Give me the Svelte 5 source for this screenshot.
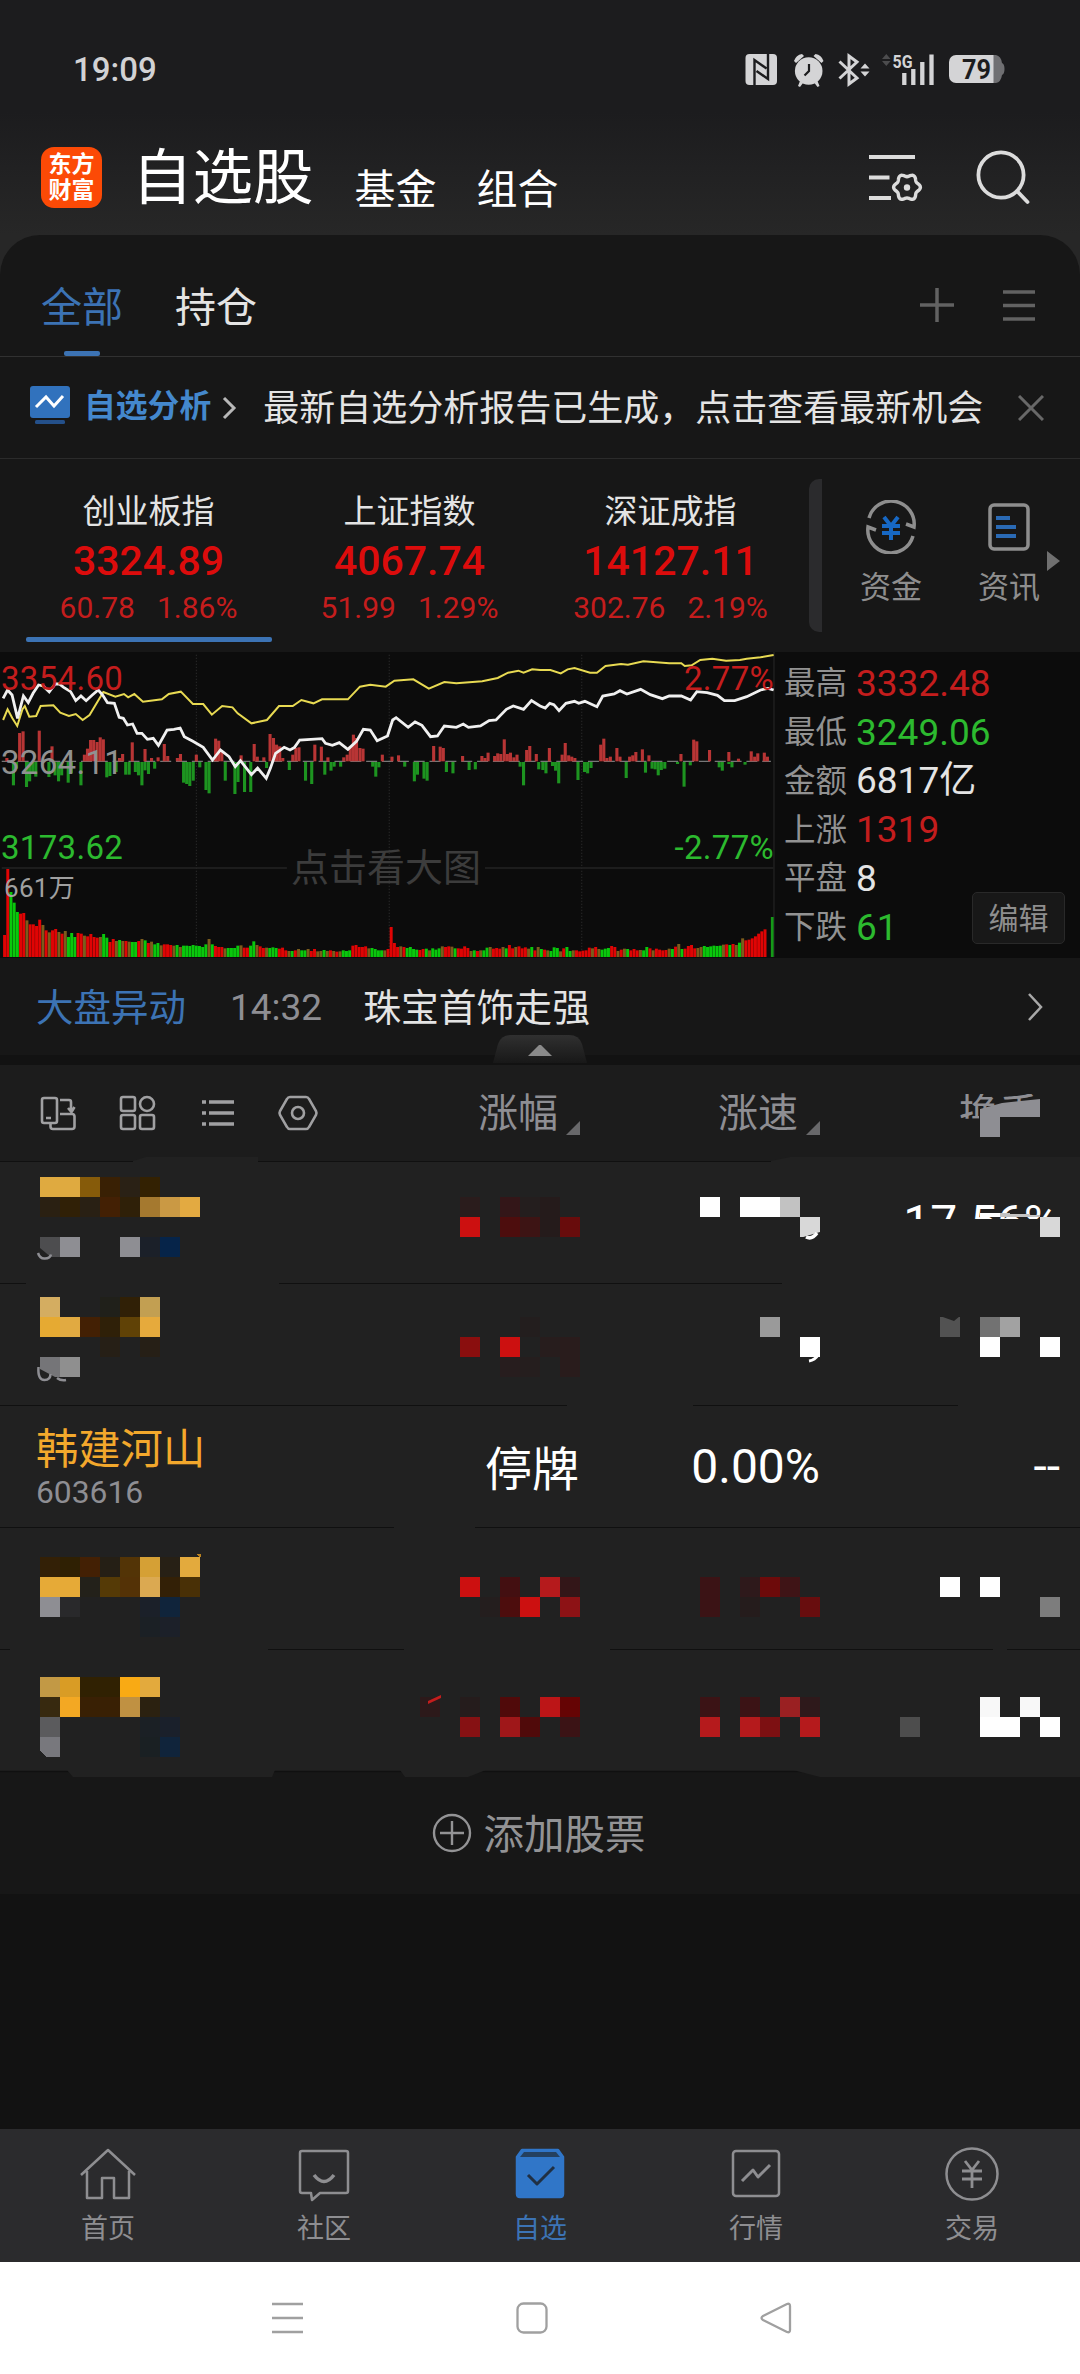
<script>
  const indexes = [
    { name: '创业板指', value: '3324.89', change: '60.78', percent: '1.86%' },
    { name: '上证指数', value: '4067.74', change: '51.99', percent: '1.29%' },
    { name: '深证成指', value: '14127.11', change: '302.76', percent: '2.19%' }
  ];

  const stats = [
    { label: '最高', value: '3332.48', tone: 'up' },
    { label: '最低', value: '3249.06', tone: 'down' },
    { label: '金额', value: '6817亿', tone: '' },
    { label: '上涨', value: '1319', tone: 'up' },
    { label: '平盘', value: '8', tone: '' },
    { label: '下跌', value: '61', tone: 'down' }
  ];

  // chart series, in units of the chart's viewBox
  const priceLine = '9,175 22,150 35,165 51,235 68,168 82,188 96,160 112,135 125,138 143,156 160,132 172,132 185,142 205,155 220,182 235,168 250,182 268,165 285,150 298,165 312,188 332,190 346,232 358,235 370,255 385,252 398,280 412,280 428,298 445,295 460,316 485,270 505,268 523,264 535,290 560,304 590,322 617,360 640,330 665,350 683,380 698,362 730,404 748,384 773,415 785,385 800,340 825,322 842,330 855,322 870,300 935,296 945,310 965,316 985,308 1010,328 1035,304 1055,268 1075,270 1095,302 1125,288 1140,240 1150,233 1185,262 1205,246 1225,256 1250,290 1270,288 1290,258 1325,262 1345,252 1360,262 1395,258 1420,242 1440,240 1470,208 1490,198 1520,208 1543,182 1568,198 1583,204 1596,190 1608,194 1623,212 1643,190 1668,184 1680,190 1698,184 1733,200 1750,168 1783,162 1800,152 1820,162 1860,148 1888,164 1923,176 1943,168 1978,168 2005,180 2023,155 2053,158 2083,166 2103,182 2133,182 2168,170 2208,150 2230,145 2246,150';
  const averageLine = '9,240 22,208 36,235 50,258 65,208 72,198 85,230 105,228 118,198 155,196 175,218 200,228 220,222 240,240 260,225 300,156 335,170 360,162 372,172 390,162 415,185 470,178 490,162 525,155 560,192 590,192 615,224 645,198 675,202 690,220 730,250 775,240 810,198 850,198 875,180 910,190 935,178 1010,178 1045,140 1075,134 1120,140 1145,122 1200,118 1245,146 1290,126 1325,130 1400,124 1445,114 1475,98 1505,92 1520,98 1545,88 1568,90 1598,90 1628,100 1648,88 1668,84 1713,98 1733,98 1758,78 1803,72 1823,74 1868,64 1943,70 1978,70 1988,78 2008,76 2033,60 2068,56 2108,62 2148,60 2168,56 2208,52 2246,45';

  const momentumUp = [[20,10],[57,85],[67,90],[114,92],[151,45],[245,20],[254,38],[263,64],[272,64],[282,58],[291,72],[300,66],[347,10],[356,22],[384,57],[421,37],[440,10],[459,12],[477,52],[487,16],[515,10],[524,22],[570,20],[626,68],[635,62],[644,30],[700,18],[738,52],[747,14],[766,12],[784,82],[794,70],[803,50],[812,45],[821,10],[850,20],[859,40],[868,42],[914,50],[933,44],[952,12],[998,12],[1008,20],[1017,45],[1026,80],[1035,70],[1045,40],[1054,38],[1110,20],[1138,14],[1157,18],[1259,46],[1278,44],[1287,40],[1343,16],[1399,16],[1408,10],[1417,26],[1436,16],[1445,24],[1454,22],[1464,66],[1473,22],[1482,26],[1492,12],[1501,20],[1529,34],[1538,46],[1557,22],[1595,40],[1632,20],[1641,55],[1651,18],[1660,14],[1669,10],[1744,50],[1753,68],[1762,10],[1772,14],[1791,40],[1800,14],[1828,14],[1837,18],[1846,28],[1865,36],[1884,18],[1977,22],[2014,65],[2023,60],[2060,34],[2116,28],[2144,8],[2181,30],[2191,14],[2200,24],[2219,26],[2228,14]];
  const momentumDown = [[39,70],[48,20],[77,75],[86,58],[95,30],[104,44],[142,45],[160,40],[170,58],[179,40],[198,62],[207,34],[235,70],[310,46],[319,42],[337,30],[365,38],[375,38],[393,30],[402,40],[412,70],[421,25],[431,36],[449,20],[533,62],[542,66],[551,72],[561,56],[580,16],[598,84],[607,94],[654,56],[682,96],[691,60],[710,90],[728,90],[774,18],[840,24],[887,56],[905,66],[943,38],[961,26],[970,14],[989,14],[1082,14],[1091,44],[1100,16],[1175,14],[1203,58],[1212,38],[1231,50],[1240,56],[1296,30],[1315,34],[1362,24],[1380,22],[1510,14],[1520,70],[1564,22],[1576,24],[1585,34],[1604,12],[1613,26],[1622,64],[1678,54],[1697,30],[1706,34],[1716,18],[1818,48],[1874,32],[1893,20],[1902,22],[1911,40],[1920,24],[1930,20],[1967,6],[1986,74],[2004,10],[2088,16],[2097,26],[2116,6],[2125,16],[2163,8]];

  const volumes = [66,264,195,163,135,130,132,110,98,98,93,112,96,80,74,80,84,75,70,78,60,72,60,72,70,64,62,69,60,58,60,69,58,45,54,48,51,48,48,46,45,45,48,54,50,42,46,38,42,35,38,38,36,34,36,30,34,34,33,36,34,33,30,38,54,38,33,30,30,26,27,27,27,34,35,28,28,34,47,36,32,27,28,27,29,27,25,28,20,18,18,20,24,20,20,24,18,24,17,18,21,18,20,18,16,17,20,18,20,34,36,30,30,32,26,27,24,20,20,20,24,90,42,30,32,30,27,30,24,22,21,24,25,20,26,22,26,32,30,32,31,26,26,25,32,27,18,20,18,20,20,28,30,25,27,25,30,26,36,26,30,32,26,29,25,30,20,30,24,22,20,18,29,27,17,26,30,18,20,20,17,19,20,28,26,30,24,22,25,27,33,30,18,22,25,24,20,24,20,21,20,30,26,20,25,22,20,21,25,24,31,39,24,25,33,36,26,27,30,33,30,32,34,33,34,37,38,36,39,36,43,56,50,52,56,62,70,77,83];
  const volumeTones = 'rrgggrrmrrrrmrmrrmrmgggrrmrrrrmggrrmgmrmggrmgrmggmrrrmgmggggggggmgrrrmggggmrrggmrrmgggrrrmgrmggmrrmmgmrmrmgggrrrrrmggggmrrrrmrggggrrgmgggmrrmgrrrrmgrmggmrrrmgrrmrrrmgrmgrmgggmrggmrrrrrmrmgggrrmrmgrrrmggrmrrrrmgrmgrrrrmmggggggmrgrmgmrrrrrrr';
  const toneColors = { r: '#e00404', g: '#09c80c', m: '#7c5c1c' };
  const volumeStep = 2217 / volumes.length;

  // six-lobed outline of the settings gear
  const gear = Array.from({ length: 73 }, (_, i) => {
    const a = (i * Math.PI) / 36;
    const r = 12 + 1.4 * Math.cos(6 * a);
    return `${(38 + r * Math.cos(a)).toFixed(2)},${(34.3 + r * Math.sin(a)).toFixed(2)}`;
  }).join(' ');

  // mosaic blocks per row: [x, y, colour], y counted from the row's top line
  const rows = [
    {
      blocks: [
        [40,16,'#dfaa40'],[60,16,'#dfaa40'],[80,16,'#865b0a'],[100,16,'#392004'],[120,16,'#2a2115'],[140,16,'#332102'],
        [40,36,'#2a2012'],[60,36,'#302006'],[80,36,'#292014'],[100,36,'#432004'],[120,36,'#2f2008'],[140,36,'#a5792f'],[160,36,'#ca9944'],[180,36,'#e3aa41'],
        [40,76,'#4d4d4f'],[60,76,'#8e8e93'],[120,76,'#8e8e93'],[140,76,'#1b2029'],[160,76,'#062449'],
        [460,36,'#2a1c1c'],[500,36,'#331618'],[520,36,'#241e1e'],[540,36,'#251b1b'],
        [460,56,'#cc1010'],[500,56,'#4d0d0d'],[520,56,'#3d1414'],[540,56,'#251b1b'],[560,56,'#680c0c'],
        [700,36,'#fff'],[740,36,'#fff'],[760,36,'#fff'],[780,36,'#c2c2c2'],[800,56,'#d8d8d8'],[1040,56,'#d8d8d8']
      ],
      gaps: [[133,258],[771,1080]]
    },
    {
      blocks: [
        [40,14,'#d4ad61'],[100,14,'#20201a'],[120,14,'#302006'],[140,14,'#c29f52'],
        [40,34,'#e6aa32'],[60,34,'#e1aa41'],[80,34,'#432004'],[100,34,'#2f2008'],[120,34,'#604206'],[140,34,'#e6aa3c'],
        [100,54,'#261f16'],[140,54,'#261f16'],[40,74,'#757578'],[60,74,'#8f8f8f'],
        [520,34,'#231e1e'],[460,54,'#8a0e0e'],[500,54,'#cc1010'],[540,54,'#271d1d'],[560,54,'#291c1c'],
        [500,74,'#271d1e'],[520,74,'#251e1e'],[560,74,'#291c1c'],
        [760,34,'#9a9a9a'],[800,54,'#fff'],[940,34,'#525252'],[980,34,'#727272'],[1000,34,'#a2a2a2'],[980,54,'#fff'],[1040,54,'#fff']
      ],
      gaps: [[26,279],[782,1080]]
    },
    {
      name: '韩建河山', code: '603616', change: '停牌', speed: '0.00%', turnover: '--',
      blocks: [],
      gaps: [[567,693],[958,1080]]
    },
    {
      blocks: [
        [40,30,'#332006'],[60,30,'#2f2003'],[80,30,'#432004'],[100,30,'#251f15'],[120,30,'#533406'],[140,30,'#d5a035'],[160,30,'#272015'],[180,30,'#e3aa3d'],
        [40,50,'#e6aa37'],[60,50,'#e6aa37'],[80,50,'#23211a'],[100,50,'#553a06'],[120,50,'#543206'],[140,50,'#dba951'],[160,50,'#332006'],[180,50,'#493006'],
        [40,70,'#8e8e93'],[60,70,'#29292b'],[140,70,'#1b2029'],[160,70,'#10243b'],[140,90,'#1b2025'],[160,90,'#1c2029'],
        [460,50,'#cc1010'],[500,50,'#430f11'],[540,50,'#b51a1c'],[560,50,'#331618'],
        [480,70,'#241e1e'],[500,70,'#4d0d0d'],[520,70,'#cc1010'],[560,70,'#8d1215'],
        [700,50,'#3b1315'],[740,50,'#2e191b'],[760,50,'#6d0a0a'],[780,50,'#3f1416'],[700,70,'#3b1315'],[740,70,'#251c1c'],[800,70,'#680d0e'],
        [940,50,'#fff'],[980,50,'#fff'],[1040,70,'#7d7d7d']
      ],
      gaps: [[394,475]]
    },
    {
      blocks: [
        [40,28,'#c29945'],[60,28,'#d99c25'],[80,28,'#302102'],[100,28,'#302102'],[120,28,'#f9aa14'],[140,28,'#e3aa3d'],
        [40,48,'#37290f'],[60,48,'#f3a823'],[80,48,'#392004'],[100,48,'#392004'],[120,48,'#c09142'],[140,48,'#2b2110'],
        [40,68,'#5b5b5d'],[140,68,'#1b2025'],[160,68,'#1a202b'],[40,88,'#78787d'],[140,88,'#1a2023'],[160,88,'#10243b'],
        [420,48,'#2c191a'],[460,48,'#251c1c'],[500,48,'#500a0a'],[540,48,'#bc1517'],[560,48,'#650404'],
        [460,68,'#861113'],[500,68,'#9f1719'],[520,68,'#500a0a'],[560,68,'#3b1315'],
        [700,48,'#3b1315'],[740,48,'#3b1315'],[780,48,'#9a2022'],[800,48,'#2e191b'],
        [700,68,'#b51a1c'],[740,68,'#b51a1c'],[760,68,'#7d1012'],[800,68,'#b51a1c'],
        [980,48,'#f8f8f8'],[1020,48,'#f8f8f8'],[900,68,'#4d4d4d'],[980,68,'#fff'],[1000,68,'#fff'],[1040,68,'#fff']
      ],
      gaps: [[10,268],[404,610],[993,1007]]
    }
  ];

  const navItems = [
    { id: 'home', label: '首页' },
    { id: 'community', label: '社区' },
    { id: 'watchlist', label: '自选' },
    { id: 'market', label: '行情' },
    { id: 'trade', label: '交易' }
  ];

  let active = 'watchlist';
</script>

<div class="screen">
  <div class="status-bar">
    <span class="time">19:09</span>
    <svg class="status-icons" width="264" height="36" viewBox="0 0 264 36">
      <rect x="3.500" y="2" width="31.500" height="31" rx="4" fill="#d4d4d6" />
      <path d="M12.500 33V8l12 8.500M26 2v25L14.500 19" fill="none" stroke="#1c1c1e" stroke-width="2.400" />
      <g fill="#d4d4d6">
        <circle cx="66.700" cy="19" r="13.800" />
        <path d="M52 9q2-6 8-7l2 2-8 7zM81.500 9q-2-6-8-7l-2 2 8 7zM58 29l3 2-3 4-2-1zM75.500 29l-3 2 3 4 2-1z" />
      </g>
      <path d="M67 12v7l-4.500 4.500" fill="none" stroke="#1c1c1e" stroke-width="2.200" />
      <path d="M97.500 9.500L115 26l-8 6V4l8 6-17.500 16.500" fill="none" stroke="#d4d4d6" stroke-width="3" />
      <path d="M118.500 16.500l4.500-5 4.500 5zM118.500 19.500l4.500 5 4.500-5z" fill="#d4d4d6" />
      <path d="M140 7l4.300-5 4.300 5zM140 9l4.300 5 4.300-5z" fill="#4c4c4e" />
      <text x="150.500" y="15.500" class="signal-label" textLength="20" lengthAdjust="spacingAndGlyphs">5G</text>
      <path d="M162.300 21v12M171.300 17v16M180.300 10v23M189.500 2.500v30.500" stroke="#d4d4d6" stroke-width="4.300" stroke-linejoin="round" />
      <path d="M250 3h4q5 1 6 8 2.500 1 2.500 6t-2.500 6q-1 7-6 8h-4z" fill="#6f6f72" />
      <path d="M214 3h37.500v28H214a7 7 0 0 1-7-7V10a7 7 0 0 1 7-7z" fill="#d4d4d6" />
      <text x="220" y="27" class="battery-label" textLength="29" lengthAdjust="spacingAndGlyphs">79</text>
    </svg>
  </div>

  <header class="header">
    <div class="logo"><span>东方</span><span>财富</span></div>
    <h1>自选股</h1>
    <span class="section">基金</span>
    <span class="section">组合</span>
    <svg class="filter-icon" width="54" height="52" viewBox="0 0 54 52" fill="none" stroke="#dcdcdc" stroke-width="4">
      <path d="M0 4h46M0 24.500h20.500M0 45h22" />
      <polygon points={gear} stroke-width="3.400" />
      <circle cx="38" cy="34.500" r="3.200" fill="#dcdcdc" stroke="none" />
    </svg>
    <svg class="search-icon" width="56" height="56" viewBox="0 0 56 56" fill="none" stroke="#dcdcdc" stroke-width="3.800">
      <circle cx="26" cy="26" r="22.600" />
      <path d="M42 42l10.500 11" stroke-linecap="round" />
    </svg>
  </header>

  <div class="tabs">
    <span class="tab active">全部</span>
    <span class="tab">持仓</span>
    <svg class="plus-icon" width="36" height="36" viewBox="0 0 36 36" stroke="#626262" stroke-width="3.500">
      <path d="M18 1v34M1 18h34" />
    </svg>
    <svg width="32" height="32" viewBox="0 0 32 32" stroke="#626262" stroke-width="3.600">
      <path d="M0 3h32M0 16.500h32M0 30h32" />
    </svg>
  </div>

  <div class="notice">
    <svg class="notice-icon" width="42" height="40" viewBox="0 0 42 40">
      <rect x="1" y="1" width="40" height="32" rx="3" fill="#3172bd" />
      <path d="M7 22l10-10 8 9 9-10" fill="none" stroke="#fff" stroke-width="3" />
      <rect x="6" y="35" width="30" height="4" rx="1.500" fill="#24508a" />
    </svg>
    <strong>自选分析</strong>
    <svg class="notice-arrow" width="15" height="24" viewBox="0 0 15 24" fill="none" stroke="#b8b8b8" stroke-width="3">
      <path d="M2 2l10 10L2 22" />
    </svg>
    <span class="notice-text">最新自选分析报告已生成，点击查看最新机会</span>
    <svg class="close" width="26" height="26" viewBox="0 0 26 26" stroke="#686868" stroke-width="3">
      <path d="M1 1l24 24M25 1L1 25" />
    </svg>
  </div>

  <div class="indexes">
    {#each indexes as item, i}
      <div class="index" class:selected={i === 0}>
        <span class="index-name">{item.name}</span>
        <span class="index-value">{item.value}</span>
        <span class="index-change"><span>{item.change}</span><span>{item.percent}</span></span>
      </div>
    {/each}
    <div class="divider"></div>
    <div class="shortcut funds">
      <svg width="52" height="54" viewBox="0 0 52 54" fill="none" stroke="#8e8e8e" stroke-width="3.500">
        <path d="M4 18A23 23 0 0 1 49 27l-8-3M48 36A23 23 0 0 1 3 27l8 3" />
        <path d="M19 17l7 9 7-9M17 26h18M17 33h18M26 26v14" stroke="#1768c4" stroke-width="4" />
      </svg>
      <span>资金</span>
    </div>
    <div class="shortcut news">
      <svg width="42" height="54" viewBox="0 0 42 54" fill="none" stroke="#8e8e8e" stroke-width="3.500">
        <rect x="2" y="5" width="38" height="44" rx="4" />
        <path d="M8 18h14M8 27h20M8 36h20" stroke="#2a6ab5" stroke-width="4" />
      </svg>
      <span>资讯</span>
    </div>
    <svg class="more-arrow" width="13" height="22" viewBox="0 0 13 22"><path d="M0 1l13 10L0 21z" fill="#707070" /></svg>
  </div>

  <div class="market">
    <div class="chart">
      <svg width="775" height="305" viewBox="0 36 2250 915" preserveAspectRatio="none">
        <g stroke="#333" stroke-dasharray="3 6" stroke-width="3">
          <path d="M570 44V951M1130 44V951M1689 44V951" />
        </g>
        <path d="M5 684H833M1408 684H2247" stroke="#232323" stroke-width="5" />
        <path d="M2247 36V951" stroke="#1d1d1d" stroke-width="5" />
        <path d="M5 364H2238" stroke="#777" stroke-width="4" stroke-dasharray="32 14" />
        {#each momentumUp as [x, h]}
          <rect x={x - 4.5} y={364 - h} width="9" height={h} fill="#b83535" />
        {/each}
        {#each momentumDown as [x, h]}
          <rect x={x - 4.5} y="366" width="9" height={h} fill="#1d9420" />
        {/each}
        {#each volumes as h, i}
          <rect x={9 + i * volumeStep} y={951 - h} width="8.600" height={h} fill={toneColors[volumeTones[i] ?? 'r']} />
        {/each}
        <rect x="2238" y="831" width="8" height="120" fill="#159a18" />
        <polyline points={averageLine} fill="none" stroke="#e8da52" stroke-width="2" vector-effect="non-scaling-stroke" />
        <polyline points={priceLine} fill="none" stroke="#f0f0f0" stroke-width="2.800" vector-effect="non-scaling-stroke" />
      </svg>
      <div class="axis">
        <div class="axis-row high"><span>3354.60</span><span>2.77%</span></div>
        <div class="axis-row mid"><span>3264.11</span></div>
        <div class="axis-row low"><span>3173.62</span><span>-2.77%</span></div>
        <div class="axis-row volume"><span>661万</span></div>
      </div>
      <span class="chart-hint">点击看大图</span>
    </div>
    <div class="stats">
      {#each stats as stat}
        <div class="stat"><span class="stat-label">{stat.label}</span><span class={stat.tone}>{stat.value}</span></div>
      {/each}
      <button class="edit">编辑</button>
    </div>
  </div>

  <div class="movement">
    <span class="movement-title">大盘异动</span>
    <span class="movement-time">14:32</span>
    <span class="movement-text">珠宝首饰走强</span>
    <svg width="16" height="30" viewBox="0 0 16 30" fill="none" stroke="#a8a8a8" stroke-width="2.500"><path d="M2 2l12 13L2 28" /></svg>
    <svg class="pull-tab" width="94" height="28" viewBox="0 0 94 28">
      <defs>
        <linearGradient id="pull" x1="0" y1="0" x2="0" y2="1">
          <stop offset="0" stop-color="#303030" /><stop offset="1" stop-color="#181818" />
        </linearGradient>
      </defs>
      <path d="M0 28Q2 20 5 9 8 0 18 0H76Q86 0 89 9 92 20 94 28z" fill="url(#pull)" />
      <path d="M35 21l11-11h2l11 11z" fill="#8a8a8a" />
    </svg>
  </div>

  <div class="table-head">
    <svg class="tools" width="290" height="38" viewBox="0 0 290 38" fill="none" stroke="#a0a0a2" stroke-width="2.600">
      <rect x="5" y="4" width="15" height="25" rx="2" />
      <path d="M9 24h5M23 6h9q2 0 2 2v10M31 14l3.500 4 3-5M23 20h12q2.500 0 2.500 2.500v10q0 2.500-2.500 2.500H16q-2.500 0-2.500-2.500V30" />
      <rect x="84" y="3" width="14" height="14" rx="2" /><circle cx="110" cy="10" r="7" />
      <rect x="84" y="21" width="14" height="14" rx="2" /><rect x="103" y="21" width="14" height="14" rx="2" />
      <path d="M165 8h4M165 19h4M165 30h4M172 8h25M172 19h25M172 30h25" stroke-width="3.400" />
      <path d="M253 3h16q2 0 3 2l7 12q1 2 0 4l-7 12q-1 2-3 2h-16q-2 0-3-2l-7-12q-1-2 0-4l7-12q1-2 3-2z" />
      <circle cx="261" cy="19" r="6" />
    </svg>
    <span class="column">涨幅<i></i></span>
    <span class="column">涨速<i></i></span>
    <span class="column covered"><b>换手</b></span>
    <svg class="head-block" width="60" height="40" viewBox="0 0 60 40"><path d="M0 10L22 4 60 0V18H20V38H0z" fill="#8e8e93" /></svg>
  </div>

  <div class="rows">
    {#each rows as row, i}
      <div class="row">
        {#if row.name}
          <div class="stock"><span class="stock-name">{row.name}</span><span class="stock-code">{row.code}</span></div>
          <span class="cell change">{row.change}</span>
          <span class="cell speed">{row.speed}</span>
          <span class="cell turnover">{row.turnover}</span>
        {/if}
        {#if i === 0}
          <span class="cell turnover partial">17.56%</span>
        {/if}
        <svg class="mosaic" width="1080" height="123" viewBox="0 0 1080 123" shape-rendering="crispEdges">
          <path d="M0 .5H1080" stroke="#101010" stroke-width="1" />
          {#each row.gaps as [from, to]}
            <rect x={from} y="0" width={to - from} height="2" fill="#212121" />
          {/each}
          {#each row.blocks as [x, y, color]}
            <rect {x} {y} width="20" height="20" fill={color} />
          {/each}
          {#if i === 0}
            <path d="M980 52h20v4h-20z" fill="#fff" /><path d="M1000 52l40 2v2h-40z" fill="#c2c2c2" />
            <g shape-rendering="auto">
              <path d="M40 87l12 10H40z" fill="#212121" />
              <path d="M38 92q2 6 7 5.500 5 0 6-4" fill="none" stroke="#8e8e93" stroke-width="2.500" />
              <path d="M800 77l20-6v7h-20z" fill="#212121" />
              <path d="M806 76q6 3 11-4" fill="none" stroke="#fff" stroke-width="3.500" />
            </g>
          {:else if i === 1}
            <g shape-rendering="auto" fill="none">
              <path d="M40 86l15 8H40z" fill="#212121" />
              <path d="M38.500 84q-1 13 6 13 6 0 6-6M57 95q4 3 9 2" stroke="#8e8e93" stroke-width="2.500" />
              <path d="M809 78q6-1 9-6" stroke="#fff" stroke-width="3" />
              <path d="M940 33h20l-6 5z" fill="#212121" />
            </g>
          {:else if i === 3}
            <path d="M196 27h5v3h-2z" fill="#b98220" />
          {:else if i === 4}
            <path d="M428 52l13-6v3l-13 6z" fill="#c41d1d" shape-rendering="auto" />
            <path d="M40 102l6 6h-6z" fill="#212121" />
          {/if}
        </svg>
      </div>
    {/each}
    <svg class="smudges" width="1080" height="623" viewBox="0 0 1080 623">
      <path d="M133 5L146 1H258V5zM771 5L790 1H1080V5z" fill="#212121" />
      <path d="M0 615.500H1080" stroke="#101010" stroke-width="1.500" />
      <path d="M67 614H275L272 621H73zM400 614H486L468 621H405zM793 614H1080V621H820z" fill="#212121" />
    </svg>
  </div>

  <div class="add-stock">
    <svg width="40" height="40" viewBox="0 0 40 40" fill="none" stroke="#939395" stroke-width="2.400">
      <circle cx="20" cy="20" r="18" /><path d="M20 8v24M8 20h24" />
    </svg>
    <span>添加股票</span>
  </div>

  <nav class="bottom-nav">
    {#each navItems as item}
      <div class="nav-item" class:current={item.id === active}>
        <svg width="56" height="56" viewBox="0 0 56 56" fill="none" stroke="currentColor" stroke-width="2.500" stroke-linejoin="round">
          {#if item.id === 'home'}
            <path d="M1 28L28 3l27 25M7 24v27h15V31h12v20h15V24" />
          {:else if item.id === 'community'}
            <path d="M6 4h44q2 0 2 2v38q0 2-2 2H24l-8 7-1-7H6q-2 0-2-2V6q0-2 2-2z" />
            <path d="M18 28q10 13 20 0" stroke-width="3.500" />
          {:else if item.id === 'watchlist'}
            <path d="M10 3h36l5 7v37q0 3-3 3H8q-3 0-3-3V10z" fill="#3076c8" stroke="#3076c8" />
            <path d="M12 5h32l4 5H8z" fill="#24405f" stroke="none" />
            <path d="M16 28l9 9 17-17" stroke="#203044" stroke-width="3" />
          {:else if item.id === 'market'}
            <rect x="5" y="4" width="46" height="45" rx="3" />
            <path d="M14 34l11-11 5 7 12-12" stroke-width="3" />
          {:else}
            <circle cx="28" cy="27" r="25.500" />
            <path d="M21 14l7 9 7-9M18 24h20M18 32h20M28 23v18" stroke-width="2.800" />
          {/if}
        </svg>
        <span>{item.label}</span>
      </div>
    {/each}
  </nav>

  <div class="system-nav">
    <svg width="32" height="32" viewBox="0 0 32 32" stroke="#a0a0a0" stroke-width="2.600"><path d="M0 2h31M0 16h31M0 30h31" /></svg>
    <svg width="32" height="32" viewBox="0 0 32 32" fill="none" stroke="#a0a0a0" stroke-width="2.300"><rect x="1.500" y="1.500" width="29" height="29" rx="6" /></svg>
    <svg width="32" height="32" viewBox="0 0 32 32" fill="none" stroke="#a0a0a0" stroke-width="2.300" stroke-linejoin="round"><path d="M3 14L27 2q3-1 3 2v24q0 3-3 2L3 18q-3-2 0-4z" /></svg>
  </div>
</div>

<style>
  :global(body) {
    margin: 0;
    background: #121212;
  }

  .screen {
    width: 1080px;
    height: 2374px;
    overflow: hidden;
    display: flex;
    flex-direction: column;
    background: #121212;
    color: #e4e4e4;
    font-family: Roboto, 'Noto Sans CJK SC', sans-serif;
    line-height: 1;
  }

  svg {
    display: block;
    flex: none;
  }

  .status-bar {
    flex: none;
    height: 112px;
    display: flex;
    justify-content: space-between;
    padding: 52px 74px 0 73px;
    box-sizing: border-box;
    background: #1c1c1e;
  }

  .status-icons {
    overflow: visible;
  }

  .time {
    font-size: 33px;
    line-height: 36px;
    font-weight: 500;
    color: #d2d2d4;
  }

  .signal-label {
    font-size: 18.500px;
    font-weight: 700;
    fill: #d4d4d6;
  }

  .battery-label {
    font-size: 27px;
    font-weight: 700;
    fill: #1c1c1e;
  }

  .header {
    flex: none;
    height: 123px;
    display: flex;
    align-items: flex-start;
    padding: 35px 49px 0 41px;
    box-sizing: border-box;
    background: linear-gradient(#1c1c1e, #272727);
  }

  .logo {
    width: 61px;
    height: 61px;
    display: flex;
    flex-direction: column;
    align-items: center;
    justify-content: center;
    border-radius: 13px;
    background: #fc4a06;
    color: #fff;
    font-size: 23px;
    font-weight: 700;
    line-height: 26px;
  }

  h1 {
    margin: 1px 41px 0 30px;
    font-size: 60.500px;
    line-height: 62px;
    font-weight: 400;
    color: #fff;
  }

  .section {
    margin: 23px 40px 0 0;
    font-size: 41px;
    line-height: 41px;
    color: #fff;
  }

  .filter-icon {
    margin: 6px 0 0 auto;
  }

  .search-icon {
    margin: 2px 0 0 52px;
  }

  .tabs {
    flex: none;
    height: 122px;
    display: flex;
    align-items: center;
    padding: 29px 45px 10px 41px;
    box-sizing: border-box;
    border-bottom: 1px solid #313131;
    border-radius: 40px 40px 0 0;
    background: #171717;
    box-shadow: 0 -40px 0 #272727;
    clip-path: inset(0);
  }

  .tab {
    position: relative;
    margin-right: 52px;
    padding-top: 6px;
    font-size: 41px;
    line-height: 50px;
  }

  .tab.active {
    color: #3c73b4;
  }

  .tab.active::after {
    content: '';
    position: absolute;
    left: 23px;
    bottom: -23px;
    width: 36px;
    height: 5px;
    border-radius: 2px;
    background: #3c73b4;
  }

  .plus-icon {
    margin: 0 48px 0 auto;
  }

  .notice {
    flex: none;
    height: 102px;
    display: flex;
    align-items: center;
    padding: 0 36px 0 29px;
    box-sizing: border-box;
    border-bottom: 1px solid #2b2b2b;
    background: #171717;
  }

  .notice-icon {
    margin-bottom: 5px;
  }

  .notice strong {
    margin-left: 13px;
    margin-bottom: 1px;
    font-size: 31.800px;
    font-weight: 700;
    color: #4488cd;
  }

  .notice-arrow {
    margin-left: 11px;
  }

  .notice-text {
    margin-left: 26px;
    padding-top: 3px;
    font-size: 36px;
    white-space: nowrap;
  }

  .close {
    margin-left: auto;
  }

  .indexes {
    flex: none;
    height: 193px;
    display: flex;
    padding-left: 18px;
    box-sizing: border-box;
    background: #171717;
  }

  .index {
    position: relative;
    width: 261px;
    display: flex;
    flex-direction: column;
    align-items: center;
    padding-top: 35px;
    box-sizing: border-box;
  }

  .index.selected::after {
    content: '';
    position: absolute;
    left: 8px;
    bottom: 10px;
    width: 246px;
    height: 5px;
    border-radius: 2px;
    background: #3c73b4;
  }

  .index-name {
    font-size: 33px;
    line-height: 36px;
  }

  .index-value {
    margin-top: 8px;
    font-size: 41px;
    line-height: 46px;
    font-weight: 500;
    color: #dc0c0c;
  }

  .index-change {
    margin-top: 6px;
    display: flex;
    gap: 22px;
    font-size: 30px;
    line-height: 36px;
    color: #c41d1d;
  }

  .divider {
    width: 13px;
    height: 153px;
    margin: 20px 0 0 8px;
    border-radius: 10px 0 0 10px;
    background: #2b2b2d;
  }

  .shortcut {
    display: flex;
    flex-direction: column;
    align-items: center;
    padding-top: 41px;
    font-size: 31px;
    color: #8e8e8e;
  }

  .shortcut span {
    margin-top: 18px;
  }

  .funds {
    margin-left: 38px;
  }

  .news {
    margin-left: 56px;
  }

  .more-arrow {
    margin: 91px 0 0 7px;
  }

  .market {
    flex: none;
    height: 306px;
    display: flex;
    background: #0c0c0c;
  }

  .chart {
    position: relative;
    width: 775px;
  }

  .axis {
    position: absolute;
    inset: 0;
    padding: 9px 1px 0;
    font-size: 33px;
    line-height: 36px;
  }

  .axis-row {
    display: flex;
    justify-content: space-between;
    letter-spacing: 0.3px;
  }

  .high {
    color: #c41d1d;
  }

  .mid {
    margin-top: 48px;
    color: #919191;
  }

  .low {
    margin-top: 49px;
    color: #2cba2f;
  }

  .volume {
    margin: 4px 0 0 3px;
    font-size: 26px;
    color: #a0a0a0;
  }

  .chart-hint {
    position: absolute;
    left: 291px;
    top: 197px;
    font-size: 38px;
    color: #3c3c3c;
  }

  .stats {
    position: relative;
    flex: 1;
    padding: 7px 0 0 9px;
  }

  .stat {
    height: 48.800px;
    display: flex;
    align-items: center;
    gap: 9px;
    font-size: 37px;
  }

  .stat-label {
    padding-top: 1px;
    font-size: 31.500px;
    color: #929292;
  }

  .up {
    color: #c41d1d;
  }

  .down {
    color: #2cba2f;
  }

  .edit {
    position: absolute;
    right: 15px;
    bottom: 14px;
    width: 93px;
    height: 52px;
    padding: 2px 0 0;
    border: 1px solid #292929;
    border-radius: 5px;
    background: #181818;
    color: #8e8e8e;
    font: inherit;
    font-size: 30px;
  }

  .movement {
    position: relative;
    flex: none;
    height: 97px;
    display: flex;
    align-items: center;
    padding: 0 37px 0 36px;
    border-bottom: 10px solid #121212;
    background: #171717;
    font-size: 37.500px;
  }

  .movement-title {
    padding-top: 4px;
    color: #3c73b4;
  }

  .movement-time {
    margin-left: 44px;
    padding-top: 2px;
    font-size: 37px;
    color: #8e8e93;
  }

  .movement-text {
    margin-left: 41px;
    margin-right: auto;
    padding-top: 5px;
    font-size: 37.800px;
  }

  .pull-tab {
    position: absolute;
    left: 493px;
    bottom: -8px;
  }

  .table-head {
    position: relative;
    flex: none;
    height: 96px;
    display: flex;
    align-items: center;
    padding-left: 37px;
    background: #1c1c1c;
    color: #8e8e93;
    font-size: 40px;
  }

  .column {
    width: 240px;
    display: flex;
    align-items: flex-end;
    justify-content: flex-end;
    gap: 8px;
    padding-top: 2px;
  }

  .tools + .column {
    width: 253px;
  }

  .column i {
    border-left: 14px solid transparent;
    border-bottom: 14px solid #68686a;
    margin-bottom: -1px;
  }

  .column.covered {
    width: 219px;
  }

  .covered b {
    font-weight: 400;
    clip-path: polygon(0 0, 100% 0, 100% 18%, 25% 50%, 25% 62%, 0 62%);
  }

  .head-block {
    position: absolute;
    left: 980px;
    top: 34px;
  }

  .rows {
    position: relative;
    flex: none;
    height: 611px;
    background: #212121;
  }

  .row {
    position: relative;
    height: 122px;
    display: flex;
    align-items: center;
    padding: 0 20px 0 36px;
    box-sizing: border-box;
  }

  .mosaic {
    position: absolute;
    inset: 0;
  }

  .smudges {
    position: absolute;
    left: 0;
    top: -5px;
  }

  .stock {
    width: 280px;
    display: flex;
    flex-direction: column;
    padding-top: 3px;
  }

  .stock-name {
    font-size: 42.300px;
    line-height: 44px;
    color: #f3a82c;
  }

  .stock-code {
    margin-top: 4px;
    font-size: 31.800px;
    line-height: 32px;
    color: #8e8e93;
  }

  .cell {
    font-size: 48px;
    text-align: right;
    color: #fff;
  }

  .change {
    width: 263px;
    padding-top: 6px;
    font-size: 47px;
  }

  .speed {
    width: 241px;
    padding-top: 1px;
  }

  .turnover {
    flex: 1;
    padding-top: 1px;
  }

  .partial {
    margin-right: 1px;
    clip-path: inset(0 0 56% 0);
  }

  .add-stock {
    flex: none;
    height: 122px;
    display: flex;
    align-items: center;
    justify-content: center;
    gap: 12px;
    padding-right: 3px;
    box-sizing: border-box;
    background: #171717;
    color: #939395;
    font-size: 40.500px;
  }

  .add-stock span {
    padding-top: 5px;
  }

  .bottom-nav {
    flex: none;
    height: 133px;
    margin-top: auto;
    display: flex;
    background: #2b2b2d;
    color: #8e8e91;
    font-size: 27px;
  }

  .nav-item {
    flex: 1;
    display: flex;
    flex-direction: column;
    align-items: center;
    padding-top: 18px;
  }

  .nav-item span {
    margin-top: 13px;
  }

  .current {
    color: #3c73b4;
  }

  .system-nav {
    flex: none;
    height: 112px;
    display: flex;
    align-items: center;
    gap: 212px;
    padding-left: 272px;
    box-sizing: border-box;
    background: #fff;
  }
</style>
